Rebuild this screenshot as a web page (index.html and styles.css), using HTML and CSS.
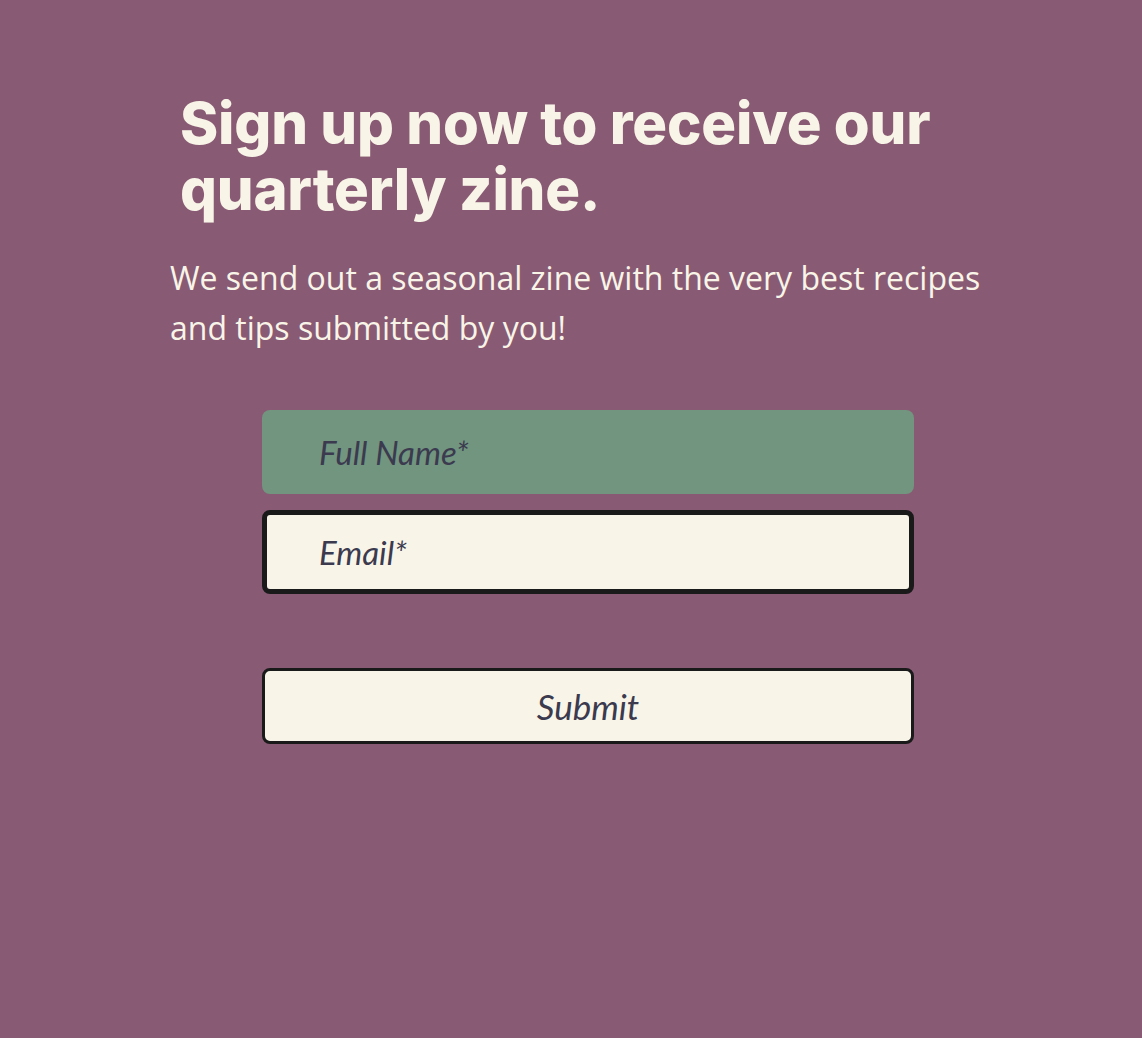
FILE: index.html
```html
<!DOCTYPE html>
<html lang="en">
<head>
    <meta charset="UTF-8">
    <meta name="viewport" content="width=device-width, initial-scale=1.0">
    <title>Quarterly Zine Sign Up</title>
    <link rel="stylesheet" href="styles.css">
</head>
<body>
    <section class="signup">
        <h1>Sign up now to receive our quarterly zine.</h1>
        <p class="intro">We send out a seasonal zine with the very best recipes and tips submitted by you!</p>

        <form class="signup-form" id="signupForm">
            <input type="text" class="field field-name" placeholder="Full Name*" required>
            <input type="email" class="field field-email" placeholder="Email*" required>
            <button type="submit" class="submit">Submit</button>
        </form>
    </section>
</body>
</html>
```

FILE: styles.css
```css
body {
    margin: 0;
    padding: 0;
    background-color: #895a73;
    min-height: 100vh;
}

.signup {
    width: 812px;
    margin: 0 auto;
    padding: 90px 0 0 10px;
}

h1 {
    font-family: 'Inter', 'Open Sans', sans-serif;
    font-weight: 800;
    font-size: 58px;
    line-height: 66px;
    letter-spacing: -0.2px;
    color: #f8f5e8;
    margin: 0 0 31px 0;
    padding-left: 10px;
}

.intro {
    font-family: 'Open Sans', sans-serif;
    font-size: 32px;
    line-height: 50px;
    color: #f8f5e8;
    margin: 0 0 57px 0;
}

.signup-form {
    display: flex;
    flex-direction: column;
    width: 652px;
    margin-left: 92px;
}

.field {
    box-sizing: border-box;
    height: 84px;
    width: 100%;
    padding: 0 0 0 57px;
    border-radius: 8px;
    font-family: 'Lato', sans-serif;
    font-style: italic;
    font-size: 33px;
    color: #3b3a4f;
    outline: none;
}

.field::placeholder {
    color: #3b3a4f;
    opacity: 1;
}

.field-name {
    background-color: #71957f;
    border: none;
    margin-bottom: 16px;
}

.field-email {
    background-color: #f8f5e8;
    border: 5px solid #1a1a1a;
    padding-left: 52px;
}

.submit {
    box-sizing: border-box;
    height: 76px;
    width: 100%;
    margin-top: 74px;
    background-color: #f8f5e8;
    border: 3px solid #1a1a1a;
    border-radius: 8px;
    font-family: 'Lato', sans-serif;
    font-style: italic;
    font-size: 35px;
    color: #3b3a4f;
    cursor: pointer;
}
```
